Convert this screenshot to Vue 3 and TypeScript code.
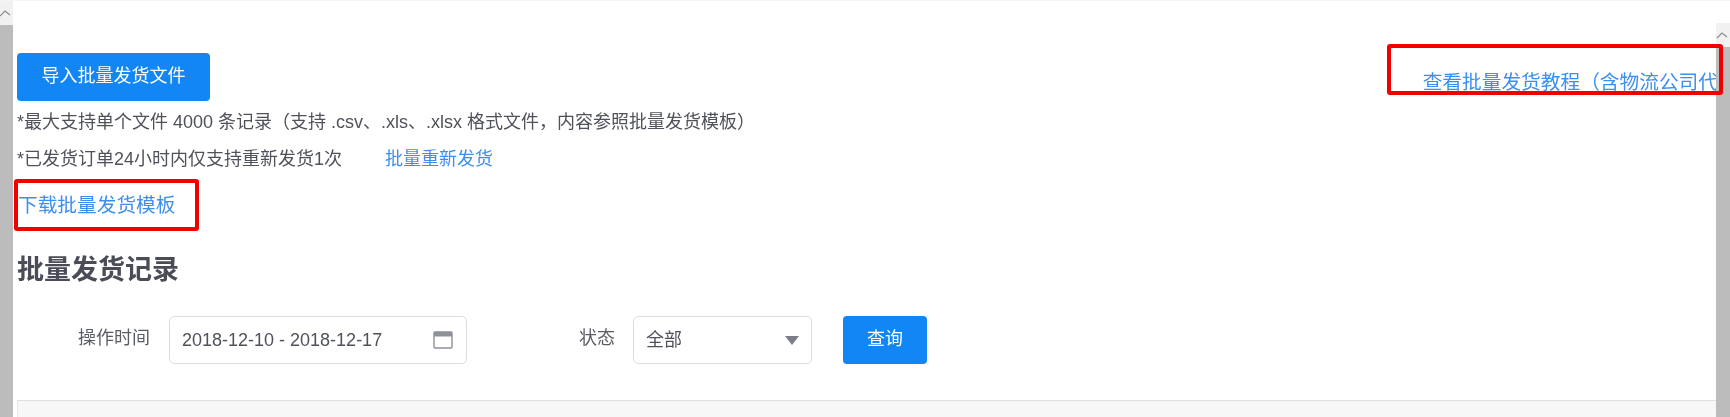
<script setup lang="ts">
const notes: string = '*最大支持单个文件 4000 条记录（支持 .csv、.xls、.xlsx 格式文件，内容参照批量发货模板）'
const resend: string = '*已发货订单24小时内仅支持重新发货1次'
</script>

<template>
  <div class="page">
    <aside class="bar bar-left">
      <div class="bar-cap">
        <svg width="12" height="8" viewBox="0 0 12 8"><path d="M0 7 L5 2 L10 6" fill="none" stroke="#8c8c8c" stroke-width="1.2" /></svg>
      </div>
      <div class="bar-thumb"></div>
    </aside>
    <main class="content">
      <div class="top-row">
        <button class="btn btn-import"><span class="btn-text">导入批量发货文件</span></button>
        <a class="link link-tutorial">查看批量发货教程（含物流公司代</a>
      </div>
      <p class="note note-first">{{ notes }}</p>
      <p class="note note-second">
        <span>{{ resend }}</span>
        <a class="link link-small">批量重新发货</a>
      </p>
      <a class="link link-template">下载批量发货模板</a>
      <h2 class="title">批量发货记录</h2>
      <form class="filters" @submit.prevent>
        <label class="label label-time">操作时间</label>
        <div class="field field-date">
          <span>2018-12-10 - 2018-12-17</span>
          <svg width="20" height="18" viewBox="0 0 20 18" class="cal">
            <rect x="1" y="1" width="18" height="16" rx="1" fill="#fff" stroke="#8f919a" stroke-width="1.4" />
            <rect x="1" y="1" width="18" height="4.5" fill="#8f919a" />
          </svg>
        </div>
        <label class="label label-status">状态</label>
        <div class="field field-select">
          <span class="select-value">全部</span>
          <i class="caret"></i>
        </div>
        <button class="btn btn-query"><span class="btn-text">查询</span></button>
      </form>
      <div class="table-head"></div>
    </main>
    <aside class="bar bar-right">
      <div class="bar-cap">
        <svg width="12" height="8" viewBox="0 0 12 8"><path d="M1 7 L6 2 L11 6" fill="none" stroke="#8c8c8c" stroke-width="1.2" /></svg>
      </div>
      <div class="bar-thumb"></div>
    </aside>
    <div class="mark mark-tutorial"></div>
    <div class="mark mark-template"></div>
  </div>
</template>

<style>
html, body { margin: 0; background: #fff; overflow: hidden; }
</style>

<style scoped>
.page {
  position: relative;
  display: flex;
  width: 1730px;
  height: 417px;
  overflow: hidden;
  background: #fff;
  border-top: 1px solid #f4f4f4;
  box-sizing: border-box;
  font-family: "Liberation Sans", "Noto Sans CJK SC", sans-serif;
  color: #4d4f58;
  filter: blur(0.45px);
}
.bar { display: flex; flex-direction: column; flex: none; width: 14px; }
.bar-left { width: 13px; }
.bar-right { padding-top: 22px; }
.bar-cap {
  height: 24px;
  background: #f1f1f1;
  display: flex;
  align-items: flex-start;
  padding-top: 8px;
  box-sizing: border-box;
}
.bar-thumb { flex: 1; background: #bcbcbc; }
.content {
  flex: 1;
  min-width: 0;
  padding: 52px 0 0 4px;
  display: flex;
  flex-direction: column;
  align-items: flex-start;
}
.top-row {
  display: flex;
  width: 100%;
  justify-content: space-between;
  height: 48px;
}
.btn {
  border: 0;
  padding: 0;
  background: #1286f5;
  color: #fff;
  border-radius: 4px;
  font: inherit;
  font-size: 18px;
  height: 48px;
}
.btn-text { display: block; margin-top: -6px; }
.btn-import { width: 193px; flex: none; }
.link { color: #3d8fee; white-space: nowrap; }
.link-tutorial {
  flex: none;
  margin-top: 16px;
  margin-right: -2px;
  font-size: 19.7px;
  line-height: 26px;
  text-decoration: underline;
  text-underline-offset: 2px;
  text-decoration-thickness: 1px;
}
.note { margin: 0; font-size: 18px; line-height: 24px; color: #50525b; white-space: nowrap; }
.note-first { margin-top: 9px; }
.note-second { margin-top: 13px; display: flex; }
.link-small { margin-left: 43px; font-size: 18px; }
.link-template { margin: 21px 0 0 1px; font-size: 19.7px; line-height: 26px; }
.title {
  margin: 34px 0 0 0;
  font-size: 27px;
  line-height: 36px;
  font-weight: 700;
  color: #4a4d58;
}
.filters { display: flex; align-items: center; margin-top: 28px; height: 48px; }
.label { font-size: 18px; color: #5b5d66; margin-top: -8px; }
.label-time { margin-left: 61px; width: 72px; flex: none; }
.field {
  box-sizing: border-box;
  height: 48px;
  border: 1px solid #dcdde0;
  border-radius: 5px;
  display: flex;
  align-items: center;
  justify-content: space-between;
  padding: 0 12px;
  font-size: 18px;
  color: #50525b;
  background: #fff;
}
.select-value { margin-top: -4px; }
.field-date { margin-left: 19px; width: 298px; }
.cal { margin-right: 1px; }
.label-status { margin-left: 112px; width: 36px; flex: none; }
.field-select { margin-left: 18px; width: 179px; }
.caret {
  width: 0;
  height: 0;
  border-left: 7px solid transparent;
  border-right: 7px solid transparent;
  border-top: 9px solid #7d7f88;
}
.btn-query { margin-left: 31px; width: 84px; flex: none; }
.table-head {
  align-self: stretch;
  margin-top: 36px;
  flex: 1;
  background: #f7f7f7;
  border-top: 1px solid #dfe0e2;
  border-left: 1px solid #e8e8e8;
}
.mark {
  position: absolute;
  box-sizing: border-box;
  border: 4px solid #f20000;
  border-radius: 3px;
  pointer-events: none;
}
.mark-tutorial { left: 1387px; top: 43px; width: 336px; height: 51px; }
.mark-template { left: 14px; top: 178px; width: 185px; height: 52px; }
</style>
